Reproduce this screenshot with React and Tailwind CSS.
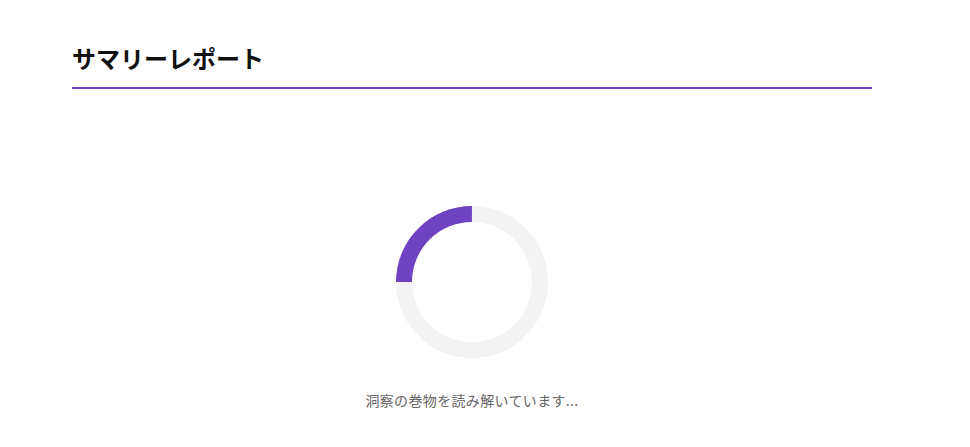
// サマリーレポート — 読み込み中の画面
export default function App() {
  return (
    <div className="min-h-screen bg-white font-['Noto_Sans_CJK_JP','Noto_Sans',sans-serif]">
      <div className="ml-[72px] w-[800px] pt-[40px]">
        <h2 className="text-[24px] leading-[36px] font-bold text-[#111] pb-[11px] border-b-2 border-[#6f42c1]">
          サマリーレポート
        </h2>

        <div className="flex flex-col items-center mt-[117px]">
          <div className="w-[152px] h-[152px] rounded-full border-[16px] border-[#f3f3f3] border-t-[#6f42c1] -rotate-45" />
          <p className="mt-[32px] text-[14px] leading-[20px] tracking-[0.35px] text-[#666]">
            洞察の巻物を読み解いています...
          </p>
        </div>
      </div>
    </div>
  );
}
